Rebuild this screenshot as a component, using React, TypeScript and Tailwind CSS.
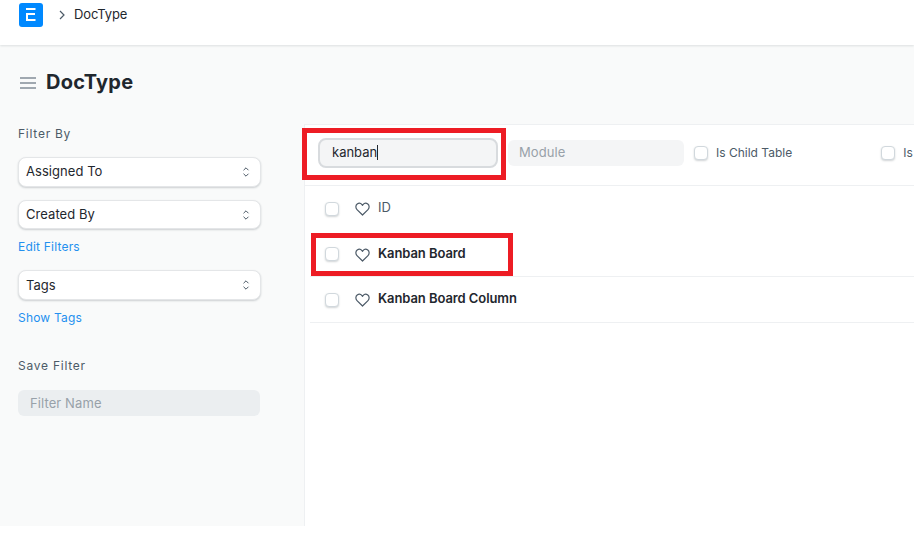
const font = { fontFamily: 'Inter, "Liberation Sans", sans-serif' };

function UpDown() {
  return (
    <svg width="8" height="12" viewBox="0 0 8 12" fill="none" stroke="#4c5a67" strokeWidth="1" strokeLinecap="round" strokeLinejoin="round">
      <path d="M1.800 4 4 1.800 6.200 4" />
      <path d="M1.800 8 4 10.200 6.200 8" />
    </svg>
  );
}

function Heart() {
  return (
    <svg width="15" height="14" viewBox="0 0 15 14" fill="none" stroke="#4c5a67" strokeWidth="1.2" strokeLinejoin="round" className="shrink-0">
      <path d="M7.500 13 2 7.600C.4 6 .5 3.300 2.200 2 3.800.9 5.800 1.200 7 2.700l.5.6.5-.6C9.200 1.200 11.200.9 12.800 2c1.700 1.300 1.800 4 .2 5.600z" />
    </svg>
  );
}

function Checkbox() {
  return <span className="block w-[14px] h-[14px] shrink-0 rounded-[4px] bg-white border border-[#d1d8dd] shadow-[0_1px_2px_rgba(25,39,52,0.2)]" />;
}

function SelectBox({ label, height, textClass }: { label: string; height: string; textClass?: string }) {
  return (
    <div className={`flex items-center justify-between ${height} w-[243px] pl-[7px] pr-[10px] bg-white rounded-[8px] border border-[#e4e6e8] shadow-[0_1px_2px_rgba(25,39,52,0.2)] text-[13px] text-[#1f272e] tracking-[0.05px]`}>
      <span className={textClass}>{label}</span>
      <UpDown />
    </div>
  );
}

function Row({ label, bold, border, height }: { label: string; bold?: boolean; border?: boolean; height: string }) {
  return (
    <div className={`flex items-center ${height} pl-[15px] ${border ? 'border-b border-[#eef0f2]' : 'pb-[1px]'}`}>
      <Checkbox />
      <span className="ml-[16px] mt-[1px]"><Heart /></span>
      <span className={`ml-[8px] mb-[1px] text-[13px] tracking-[-0.08px] ${bold ? 'font-semibold text-[#1f272e]' : 'text-[#4c5a67]'}`}>{label}</span>
    </div>
  );
}

export default function App() {
  return (
    <div className="relative w-[914px] h-[545px] overflow-hidden bg-white" style={font}>
      {/* Navbar */}
      <div className="relative z-10 flex items-center h-[45px] pb-[15px] pl-[19px] bg-white shadow-[0_1px_2px_rgba(25,39,52,0.12)]">
        <div className="flex items-center justify-center w-[24px] h-[24px] rounded-[3px] bg-[#0089ff] mt-[-1px]">
          <svg width="10" height="13" viewBox="0 0 10 13" fill="none" stroke="white" strokeWidth="2">
            <path d="M0 1h9.500M9 6H1v6h8.500" />
          </svg>
        </div>
        <svg width="8" height="10" viewBox="0 0 8 10" fill="none" stroke="#4c5a67" strokeWidth="1.2" className="ml-[15px]">
          <path d="M2 1l4 4-4 4" />
        </svg>
        <span className="ml-[8px] text-[13px] text-[#1f272e] tracking-[-0.1px]">DocType</span>
      </div>

      <div className="h-[481px] bg-[#f9fafa]">
        {/* Page head */}
        <div className="flex items-center h-[75px] pl-[20px]">
          <div className="flex flex-col gap-[3px] w-[16px]">
            <span className="block h-[2px] bg-[#a0a8b0]" />
            <span className="block h-[2px] bg-[#a0a8b0]" />
            <span className="block h-[2px] bg-[#a0a8b0]" />
          </div>
          <h1 className="ml-[10px] mt-[-1px] text-[20px] leading-[24px] font-bold text-[#1f272e] tracking-[0.25px]">DocType</h1>
        </div>

        <div className="flex h-[406px]">
          {/* Sidebar */}
          <div className="w-[304px] shrink-0 pl-[18px]">
            <div className="h-[37px] pt-[6px] text-[12px] leading-[16px] tracking-[0.75px] text-[#4c5a67]">Filter By</div>
            <SelectBox label="Assigned To" height="h-[30px]" />
            <div className="mt-[13px]"><SelectBox label="Created By" height="h-[29px]" /></div>
            <div className="mt-[10px] text-[12px] leading-[16px] tracking-[0.2px] text-[#2490ef]">Edit Filters</div>
            <div className="mt-[15px]"><SelectBox label="Tags" height="h-[30px]" textClass="mt-[1px]" /></div>
            <div className="mt-[10px] text-[12px] leading-[16px] tracking-[0.2px] text-[#2490ef]">Show Tags</div>
            <div className="mt-[32px] text-[12px] leading-[16px] tracking-[0.75px] text-[#4c5a67]">Save Filter</div>
            <div className="mt-[16px] flex items-center w-[242px] h-[26px] pl-[12px] pt-[1px] rounded-[6px] bg-[#ebeef0] text-[13px] text-[#98a1a9] tracking-[0.1px]">Filter Name</div>
          </div>

          {/* List */}
          <div className="flex-1 min-w-0 overflow-hidden mt-[4px] bg-white border-l border-[#eef0f2]">
            <div className="flex items-center h-[62px] pb-[5px] border-y border-[#eef0f2] whitespace-nowrap">
              <div className="flex items-center shrink-0 w-[180px] h-[30px] ml-[13px] pl-[12px] rounded-[8px] bg-[#f4f5f6] border-2 border-[#d8dbde] text-[13px] text-[#1f272e]">
                kanban<span className="block w-px h-[15px] bg-[#1f272e]" />
              </div>
              <div className="flex items-center shrink-0 w-[176px] h-[26px] ml-[10px] pl-[11px] pt-[1px] rounded-[6px] bg-[#f4f5f6] text-[13px] text-[#98a1a9] tracking-[0.1px]">Module</div>
              <div className="ml-[10px]"><Checkbox /></div>
              <span className="ml-[8px] text-[12px] text-[#4c5a67]">Is Child Table</span>
              <div className="ml-[89px]"><Checkbox /></div>
              <span className="ml-[8px] text-[12px] text-[#4c5a67]">Is</span>
            </div>
            <div className="ml-[5px]">
              <Row label="ID" height="h-[46px]" />
              <Row label="Kanban Board" bold border height="h-[45px]" />
              <Row label="Kanban Board Column" bold border height="h-[46px]" />
            </div>
          </div>
        </div>
      </div>

      {/* Annotation boxes drawn over the screenshot */}
      <div className="absolute left-[302px] top-[128px] w-[204px] h-[52px] border-[5px] border-[#ed1c24]" />
      <div className="absolute left-[311px] top-[233px] w-[202px] h-[43px] border-[5px] border-[#ed1c24]" />
    </div>
  );
}
